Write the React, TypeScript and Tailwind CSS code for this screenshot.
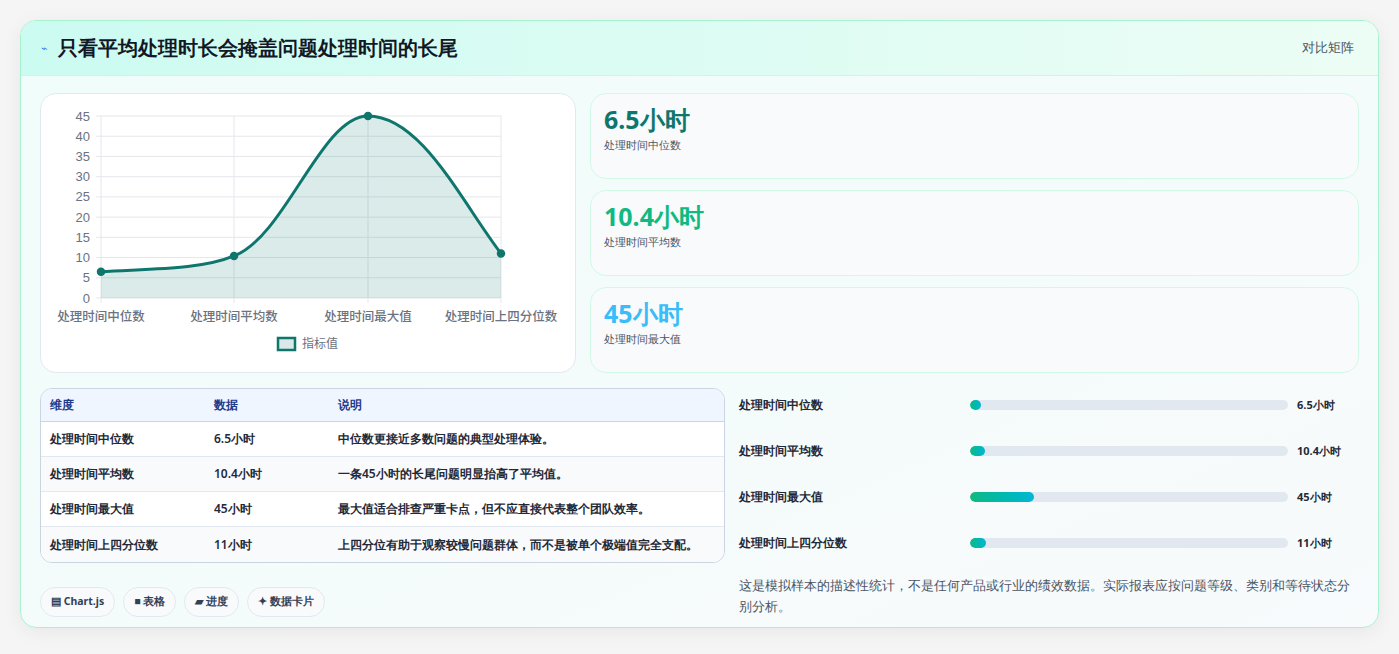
import React from "react";

const stats = [
  { v: "6.5小时", l: "处理时间中位数", c: "text-[#0f766e]" },
  { v: "10.4小时", l: "处理时间平均数", c: "text-[#10b981]" },
  { v: "45小时", l: "处理时间最大值", c: "text-[#38bdf8]" },
];

const rows = [
  ["处理时间中位数", "6.5小时", "中位数更接近多数问题的典型处理体验。", 6.5],
  ["处理时间平均数", "10.4小时", "一条45小时的长尾问题明显抬高了平均值。", 10.4],
  ["处理时间最大值", "45小时", "最大值适合排查严重卡点，但不应直接代表整个团队效率。", 45],
  ["处理时间上四分位数", "11小时", "上四分位有助于观察较慢问题群体，而不是被单个极端值完全支配。", 11],
] as const;

function Chart() {
  const ys = [0, 5, 10, 15, 20, 25, 30, 35, 40, 45];
  const xs = [100, 233, 367, 500];
  const labels = ["处理时间中位数", "处理时间平均数", "处理时间最大值", "处理时间上四分位数"];
  const y = (v: number) => 297 - v * 4.044;
  const pts = [6.5, 10.4, 45, 11].map((v, i) => [xs[i], y(v)]);
  const line = `M100,${pts[0][1]} C150,${pts[0][1] - 3} 200,${pts[0][1] - 2} 233,${pts[1][1]} C285,235 320,115 367,115 C420,115 460,200 500,${pts[3][1]}`;
  return (
    <svg width="535" height="279" viewBox="40 93 535 279" className="block">
      {ys.map((v) => (
        <g key={v}>
          <line x1={95} x2={500} y1={y(v)} y2={y(v)} stroke="#e5e7eb" />
          <text x={89} y={y(v) + 4.5} textAnchor="end" fontSize="13" fill="#6b7280" fontFamily="Liberation Sans, sans-serif">{v}</text>
        </g>
      ))}
      {xs.map((x, i) => (
        <g key={x}>
          <line x1={x} x2={x} y1={115} y2={302} stroke="#e5e7eb" />
          <text x={x} y={320} textAnchor="middle" fontSize="12.5" fontWeight="500" fill="#6b7280" fontFamily="Noto Sans CJK SC, sans-serif">{labels[i]}</text>
        </g>
      ))}
      <path d={`${line} L500,297 L100,297 Z`} fill="#0f766e" fillOpacity="0.15" />
      <path d={line} fill="none" stroke="#0f766e" strokeWidth="3" />
      {pts.map(([px, py], i) => (
        <circle key={i} cx={px} cy={py} r="3.5" fill="#0f766e" stroke="#0f766e" strokeWidth="1.5" />
      ))}
      <rect x={277} y={337} width={17} height={12} fill="#dbe8e8" stroke="#0f766e" strokeWidth="2.5" />
      <text x={301} y={347} fontSize="12" fill="#6b7280" fontFamily="Noto Sans CJK SC, sans-serif">指标值</text>
    </svg>
  );
}

export default function App() {
  return (
    <div className="min-h-screen bg-[#f5f5f5] p-5 pb-6 font-['Noto_Sans_CJK_SC',sans-serif]">
      <div className="rounded-2xl border border-[#a7f3d0] bg-gradient-to-br from-[#f0fdfa] to-[#f8fafc] shadow-[0_4px_20px_rgba(0,0,0,0.06)] overflow-hidden">
        <div className="flex h-[55px] items-center justify-between border-b border-[#dbeafe] bg-gradient-to-r from-[#ccfbf1] to-[#ecfdf5] px-5">
          <div className="flex items-center gap-2.5">
            <span className="text-[11px] text-[#3b82f6]">⌁</span>
            <h1 className="text-[20px] font-bold text-[#111827]">只看平均处理时长会掩盖问题处理时间的长尾</h1>
          </div>
          <span className="text-[13px] font-medium text-[#4b5563] mr-1">对比矩阵</span>
        </div>
        <div className="px-[19px] pt-[17px] pb-[10px]">
          <div className="flex gap-[14px]">
            <div className="w-[536px] h-[280px] rounded-2xl border border-[#e2e8f0] bg-white overflow-hidden">
              <Chart />
            </div>
            <div className="flex-1 flex flex-col gap-[11px]">
              {stats.map((s) => (
                <div key={s.l} className="h-[86px] rounded-2xl border border-[#d1fae5] bg-[#f8fafc] px-[13px] pt-[9px]">
                  <div className={`text-[25px] font-bold leading-[32px] ${s.c}`}>{s.v}</div>
                  <div className="text-[11px] font-medium text-[#4b5563] mt-0.5">{s.l}</div>
                </div>
              ))}
            </div>
          </div>
          <div className="mt-[15px] flex gap-[14px]">
            <div className="w-[685px]">
              <div className="rounded-xl border border-[#cbd5e1] overflow-hidden text-[12px] font-semibold">
                <div className="flex h-[33px] items-center bg-[#eff6ff] border-b border-[#cbd5e1] text-[#1e3a8a] font-bold">
                  <div className="w-[164px] pl-[9px]">维度</div>
                  <div className="w-[124px] pl-[9px]">数据</div>
                  <div className="flex-1 pl-[9px]">说明</div>
                </div>
                {rows.map((r, i) => (
                  <div key={r[0]} className={`flex h-[35px] items-center text-[#1f2937] ${i < 3 ? "border-b border-[#e2e8f0]" : ""} ${i % 2 ? "bg-[#f8fafc]" : "bg-white"}`}>
                    <div className="w-[164px] pl-[9px]">{r[0]}</div>
                    <div className="w-[124px] pl-[9px]">{r[1]}</div>
                    <div className="flex-1 pl-[9px]">{r[2]}</div>
                  </div>
                ))}
              </div>
              <div className="mt-6 flex gap-2 text-[10.5px] font-bold text-[#334155]">
                {["▤ Chart.js", "■ 表格", "▰ 进度", "✦ 数据卡片"].map((c) => (
                  <span key={c} className="rounded-full border border-[#e2e8f0] bg-[#f8fafc] px-2.5 py-1.5">{c}</span>
                ))}
              </div>
            </div>
            <div className="flex-1 -mt-[6px]">
              {rows.map((r) => (
                <div key={r[0]} className="flex h-[46px] items-center text-[12px] font-bold text-[#1f2937]">
                  <div className="w-[231px]">{r[0]}</div>
                  <div className="w-[318px] h-[10px] rounded-full bg-[#e2e8f0] overflow-hidden">
                    <div className="h-full rounded-full bg-gradient-to-r from-[#10b981] to-[#06b6d4]" style={{ width: `${Math.max((r[3] / 225) * 100, 3.5)}%` }} />
                  </div>
                  <div className="ml-[9px] text-[11px]">{r[1]}</div>
                </div>
              ))}
              <p className="mt-[9px] w-[615px] text-[13px] font-medium leading-[21px] text-[#4b5563]">
                这是模拟样本的描述性统计，不是任何产品或行业的绩效数据。实际报表应按问题等级、类别和等待状态分别分析。
              </p>
            </div>
          </div>
        </div>
      </div>
    </div>
  );
}
